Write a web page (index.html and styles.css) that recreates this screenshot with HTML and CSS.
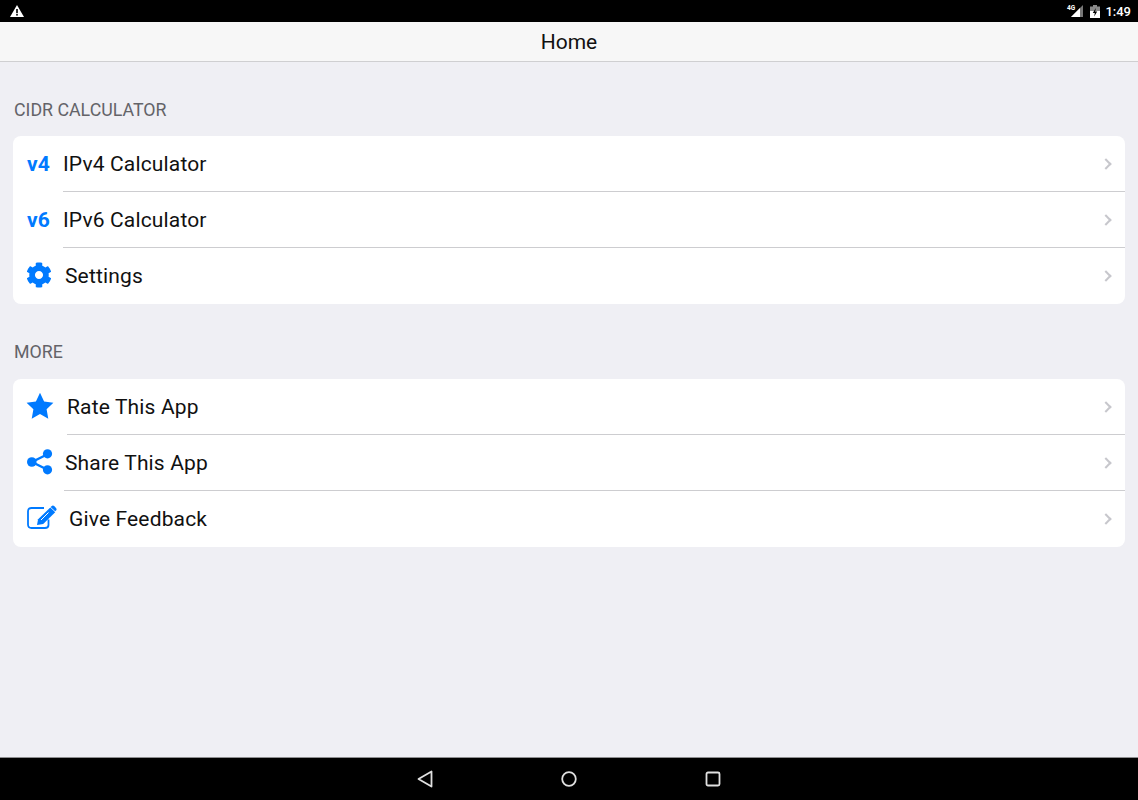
FILE: index.html
```html
<!DOCTYPE html>
<html lang="en">
<head>
    <meta charset="UTF-8">
    <meta name="viewport" content="width=device-width, initial-scale=1.0">
    <title>Home</title>
    <link rel="stylesheet" href="styles.css">
</head>
<body>
    <div class="app">
        <div class="status-bar">
            <svg class="status-warning" viewBox="0 0 14 12" width="14" height="12">
                <path d="M7 0 L14 12 L0 12 Z" fill="#fff"/>
                <rect x="6.2" y="4" width="1.6" height="4.2" fill="#000"/>
                <rect x="6.2" y="9" width="1.6" height="1.6" fill="#000"/>
            </svg>
            <div class="status-right">
                <svg class="status-signal" viewBox="0 0 18 14" width="18" height="14">
                    <path d="M17 1 V13 H5 Z" fill="#777"/>
                    <path d="M14 4 V13 H5 Z" fill="#fff"/>
                    <text x="1" y="5.500" class="status-4g">4G</text>
                </svg>
                <svg class="status-battery" viewBox="0 0 10 13" width="10" height="13">
                    <path d="M3 0 H7 V1.500 H10 V13 H0 V1.500 H3 Z" fill="#8a8a8a"/>
                    <path d="M0 6 H10 V13 H0 Z" fill="#fff"/>
                    <path d="M5.800 3 L2.800 8 H4.800 L4.200 11.500 L7.200 6.500 H5.200 Z" fill="#000"/>
                </svg>
                <span class="status-time">1:49</span>
            </div>
        </div>

        <div class="nav-bar">Home</div>

        <div class="content">
            <div class="section-title">CIDR CALCULATOR</div>
            <div class="card">
                <div class="row">
                    <span class="row-version">v4</span>
                    <div class="row-body row-body-ipv"><span>IPv4 Calculator</span><span class="chevron"></span></div>
                </div>
                <div class="row">
                    <span class="row-version">v6</span>
                    <div class="row-body row-body-ipv"><span>IPv6 Calculator</span><span class="chevron"></span></div>
                </div>
                <div class="row">
                    <svg class="row-icon" viewBox="0 0 512 512" width="26" height="26">
                        <path fill="#007aff" d="M487.4 315.7l-42.6-24.6c4.3-23.2 4.3-47 0-70.2l42.6-24.6c4.9-2.8 7.1-8.6 5.5-14-11.1-35.6-30-67.8-54.7-94.6-3.8-4.1-10-5.1-14.8-2.3L380.8 110c-17.9-15.4-38.5-27.3-60.8-35.1V25.8c0-5.6-3.9-10.5-9.4-11.7-36.7-8.2-74.3-7.8-109.2 0-5.5 1.2-9.4 6.1-9.4 11.7V75c-22.2 7.9-42.8 19.8-60.8 35.1L88.7 85.5c-4.9-2.8-11-1.9-14.8 2.3-24.7 26.7-43.6 58.9-54.7 94.6-1.7 5.4.6 11.2 5.5 14L67.3 221c-4.3 23.2-4.3 47 0 70.2l-42.6 24.6c-4.9 2.8-7.1 8.6-5.5 14 11.1 35.6 30 67.8 54.7 94.6 3.8 4.1 10 5.1 14.8 2.3l42.6-24.6c17.9 15.4 38.5 27.3 60.8 35.1v49.2c0 5.6 3.9 10.5 9.4 11.7 36.7 8.2 74.3 7.8 109.2 0 5.5-1.2 9.4-6.1 9.4-11.7v-49.2c22.2-7.9 42.8-19.8 60.8-35.1l42.6 24.6c4.9 2.8 11 1.9 14.8-2.3 24.7-26.7 43.6-58.9 54.7-94.6 1.5-5.5-.7-11.3-5.6-14.1zM256 336c-44.1 0-80-35.9-80-80s35.9-80 80-80 80 35.9 80 80-35.9 80-80 80z"/>
                    </svg>
                    <div class="row-body row-body-settings"><span>Settings</span><span class="chevron"></span></div>
                </div>
            </div>

            <div class="section-title section-title-more">MORE</div>
            <div class="card">
                <div class="row">
                    <svg class="row-icon row-icon-star" viewBox="0 0 28 28" width="28" height="28">
                        <path fill="#007aff" d="M14 .8l4.1 8.6 9.3 1.3-6.8 6.6 1.7 9.4-8.3-4.6-8.3 4.6 1.7-9.4L.6 10.7l9.3-1.3z"/>
                    </svg>
                    <div class="row-body row-body-rate"><span>Rate This App</span><span class="chevron"></span></div>
                </div>
                <div class="row">
                    <svg class="row-icon row-icon-share" viewBox="0 0 26 26" width="26" height="26">
                        <path stroke="#007aff" stroke-width="2.4" d="M20 5.500 L5 13 L20 20.500" fill="none"/>
                        <circle cx="20.500" cy="4.800" r="4.600" fill="#007aff"/>
                        <circle cx="4.800" cy="13" r="4.800" fill="#007aff"/>
                        <circle cx="20.500" cy="20.800" r="4.600" fill="#007aff"/>
                    </svg>
                    <div class="row-body row-body-share"><span>Share This App</span><span class="chevron"></span></div>
                </div>
                <div class="row">
                    <svg class="row-icon row-icon-share" viewBox="0 0 30 26" width="30" height="26">
                        <path d="M21.500 14.500 V20 C21.500 22.300 20.300 23 18 23 H4.500 C2.200 23 1 21.800 1 19.500 V6.500 C1 4.200 2.200 3 4.500 3 H17" fill="none" stroke="#007aff" stroke-width="1.800"/>
                        <path fill="#007aff" d="M23.300 2.500 L28.200 7.200 L16.200 19 L10 20 L11.100 14.200 Z"/>
                        <path fill="#007aff" d="M24.500 1.200 C25.400 .3 26.400 .3 27.200 1.100 L29 2.900 C29.800 3.700 29.800 4.700 29 5.500 L28.200 6.300 L23.600 1.900 Z"/>
                        <path d="M21.500 7.500 L14 15" stroke="#fff" stroke-width="1"/>
                    </svg>
                    <div class="row-body row-body-feedback"><span>Give Feedback</span><span class="chevron"></span></div>
                </div>
            </div>
        </div>

        <div class="bottom-bar">
            <svg viewBox="0 0 16 18" width="16" height="18">
                <path d="M14.500 1.500 V16.500 L1.500 9 Z" fill="none" stroke="#e0e0e0" stroke-width="1.800" stroke-linejoin="round"/>
            </svg>
            <svg viewBox="0 0 16 16" width="16" height="16">
                <circle cx="8" cy="8" r="6.800" fill="none" stroke="#e0e0e0" stroke-width="1.800"/>
            </svg>
            <svg viewBox="0 0 16 16" width="16" height="16">
                <rect x="1.500" y="1.500" width="13" height="13" rx="1.500" fill="none" stroke="#e0e0e0" stroke-width="1.800"/>
            </svg>
        </div>
    </div>
</body>
</html>
```

FILE: styles.css
```css
* {
    margin: 0;
    padding: 0;
    box-sizing: border-box;
}

body {
    font-family: Roboto, "Liberation Sans", sans-serif;
    background: #efeff4;
    color: #000;
}

.app {
    height: 800px;
    display: flex;
    flex-direction: column;
}

.status-bar {
    height: 22px;
    background: #000;
    display: flex;
    align-items: center;
    justify-content: space-between;
    padding: 0 7px 0 10px;
    flex-shrink: 0;
}

.status-warning {
    margin-bottom: 1px;
}

.status-right {
    display: flex;
    align-items: center;
    gap: 6px;
}

.status-4g {
    font-size: 6.500px;
    font-weight: 700;
    fill: #fff;
}

.status-time {
    color: #fff;
    font-size: 13px;
    font-weight: 500;
    margin-left: -1px;
}

.nav-bar {
    height: 40px;
    background: #f7f7f7;
    border-bottom: 1px solid #cfcfd1;
    display: flex;
    align-items: center;
    justify-content: center;
    font-size: 21px;
    color: #111;
    flex-shrink: 0;
}

.content {
    flex: 1;
    padding: 0 13px;
}

.section-title {
    font-size: 17.800px;
    color: #636368;
    margin: 38px 0 16px 1px;
    line-height: 20px;
}

.section-title-more {
    margin-top: 38px;
    margin-bottom: 17px;
}

.card {
    background: #fff;
    border-radius: 8px;
    overflow: hidden;
}

.row {
    height: 56px;
    display: flex;
    align-items: stretch;
}

.row-version {
    color: #007aff;
    font-size: 21px;
    font-weight: 700;
    width: 50px;
    padding-left: 14px;
    line-height: 56px;
    flex-shrink: 0;
}

.row-icon {
    margin: 14px 0 0 13px;
    flex-shrink: 0;
}

.row-icon-star {
    margin-top: 13px;
}

.row-icon-share {
    margin-left: 14px;
}

.row-body {
    flex: 1;
    display: flex;
    align-items: center;
    justify-content: space-between;
    font-size: 21px;
    letter-spacing: 0.15px;
    color: #111;
    border-bottom: 1px solid #cdcdd0;
    padding-right: 13px;
}

.row:last-child .row-body {
    border-bottom: none;
}

.row-body-settings {
    margin-left: 13px;
}

.row-body-rate {
    margin-left: 13px;
}

.row-body-share {
    margin-left: 11px;
    padding-left: 1px;
}

.row-body-feedback {
    margin-left: 12px;
}

.chevron {
    width: 8px;
    height: 8px;
    border-top: 2px solid #c7c7cc;
    border-right: 2px solid #c7c7cc;
    transform: rotate(45deg);
    margin-right: 2px;
}

.bottom-bar {
    height: 43px;
    background: #000;
    border-top: 1px solid #8e8e90;
    display: flex;
    align-items: center;
    justify-content: center;
    gap: 128px;
    flex-shrink: 0;
}
```
